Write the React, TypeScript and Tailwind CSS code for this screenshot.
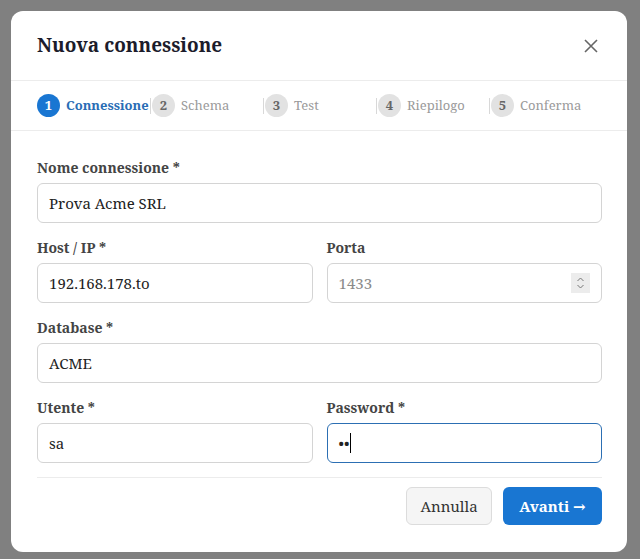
import React from "react";

const font = { fontFamily: '"Noto Serif", "DejaVu Serif", serif' };

function Step({ n, label, active, first }: { n: number; label: string; active?: boolean; first?: boolean }) {
  return (
    <div className="flex min-w-0 flex-1 basis-0 items-center">
      {!first && <div className="mr-[1px] h-4 w-px bg-[#d8d8d8]" />}
      <div
        className={
          active
            ? "flex h-[23px] w-[23px] shrink-0 items-center justify-center rounded-full bg-[#1976d2] text-[13px] font-bold text-white"
            : "flex h-[23px] w-[23px] shrink-0 items-center justify-center rounded-full bg-[#e2e2e2] text-[13px] font-bold text-[#666]"
        }
      >
        {n}
      </div>
      <span className={active ? "ml-[6px] whitespace-nowrap text-[13px] font-bold text-[#2a6db5]" : "ml-[6px] whitespace-nowrap text-[13px] text-[#9a9a9a]"}>
        {label}
      </span>
    </div>
  );
}

function Label({ children }: { children: React.ReactNode }) {
  return <div className="mb-[5px] h-5 text-[14px] font-bold leading-5 text-[#444]">{children}</div>;
}

function Input({ value, placeholder, focused, spinner }: { value?: string; placeholder?: string; focused?: boolean; spinner?: boolean }) {
  return (
    <div
      className={
        focused
          ? "flex h-10 items-center rounded-[6px] border border-[#2c6fb3] bg-white px-[11px]"
          : "flex h-10 items-center rounded-[6px] border border-[#d4d4d4] bg-white px-[11px]"
      }
    >
      {value !== undefined ? (
        <span className="text-[15px] text-[#222]">{value}</span>
      ) : (
        <span className="text-[15px] text-[#8a8a8a]">{placeholder}</span>
      )}
      {focused && <span className="ml-[1px] h-5 w-px bg-black" />}
      {spinner && (
        <div className="ml-auto flex h-[20px] w-[19px] flex-col items-center justify-center bg-[#ececec]">
          <svg width="9" height="14" viewBox="0 0 9 14" fill="none" stroke="#777" strokeWidth="1">
            <path d="M1.5 5 L4.5 2 L7.5 5" />
            <path d="M1.5 9 L4.5 12 L7.5 9" />
          </svg>
        </div>
      )}
    </div>
  );
}

export default function App() {
  return (
    <div className="flex h-[559px] w-[640px] bg-[#808080] p-[11px] pb-[7px] pr-[13px]" style={font}>
      <div className="flex w-full flex-col rounded-[12px] bg-white">
        <div className="flex h-[70px] items-center justify-between border-b border-[#ececec] pl-[26px] pr-[29px]">
          <h1 className="text-[19px] font-bold text-[#1c1c2b]">Nuova connessione</h1>
          <svg width="14" height="14" viewBox="0 0 14 14" stroke="#666" strokeWidth="1.6" fill="none">
            <path d="M1 1 L13 13 M13 1 L1 13" />
          </svg>
        </div>
        <div className="flex h-[50px] items-center border-b border-[#ececec] pl-[26px] pr-[25px]">
          <Step n={1} label="Connessione" active first />
          <Step n={2} label="Schema" />
          <Step n={3} label="Test" />
          <Step n={4} label="Riepilogo" />
          <Step n={5} label="Conferma" />
        </div>
        <div className="flex flex-col gap-[15px] pl-[26px] pr-[25px] pt-[27px]">
          <div>
            <Label>Nome connessione *</Label>
            <Input value="Prova Acme SRL" />
          </div>
          <div className="grid grid-cols-2 gap-[14px]">
            <div>
              <Label>Host / IP *</Label>
              <Input value="192.168.178.to" />
            </div>
            <div>
              <Label>Porta</Label>
              <Input placeholder="1433" spinner />
            </div>
          </div>
          <div>
            <Label>Database *</Label>
            <Input value="ACME" />
          </div>
          <div className="grid grid-cols-2 gap-[14px]">
            <div>
              <Label>Utente *</Label>
              <Input value="sa" />
            </div>
            <div>
              <Label>Password *</Label>
              <Input value="••" focused />
            </div>
          </div>
        </div>
        <div className="ml-[26px] mr-[25px] mt-[14px] flex justify-end gap-[11px] border-t border-[#ececec] pt-[9px]">
          <button className="h-[38px] w-[86px] rounded-[6px] border border-[#dcdcdc] bg-[#f5f5f5] text-[15px] text-[#333]">
            Annulla
          </button>
          <button className="h-[38px] w-[99px] rounded-[6px] bg-[#1976d2] text-[15px] font-bold text-white">
            Avanti →
          </button>
        </div>
      </div>
    </div>
  );
}
